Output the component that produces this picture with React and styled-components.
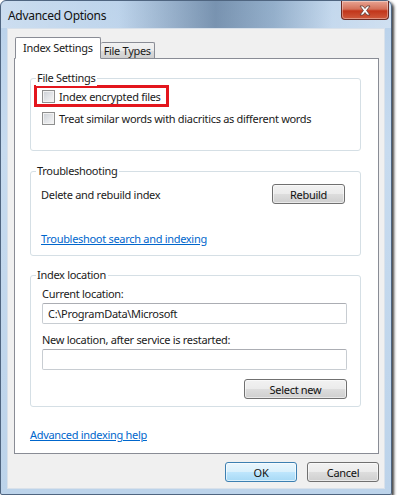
import React from 'react';
import styled, { createGlobalStyle } from 'styled-components';

const GlobalStyle = createGlobalStyle`
  body {
    margin: 0;
    background: #ffffff;
    font-family: 'Segoe UI', 'Noto Sans', sans-serif;
    font-size: 11px;
    letter-spacing: -0.3px;
    color: #1b1b1b;
  }
`;

const Window = styled.div`
  width: 390px;
  height: 493px;
  border: 1px solid #4f6580;
  border-radius: 6px 6px 2px 2px;
  background: linear-gradient(to bottom, #b9d1ea 0%, #c7dbef 30%, #bcd3ea 100%);
  box-shadow: 2px 2px 3px rgba(0, 0, 0, 0.75);
  display: flex;
  flex-direction: column;
`;

const TitleBar = styled.div`
  height: 27px;
  display: flex;
  align-items: flex-start;
  border-radius: 6px 6px 0 0;
  background: linear-gradient(
    to right,
    rgba(255, 255, 255, 0.25) 0%,
    rgba(255, 255, 255, 0.05) 30%,
    rgba(40, 70, 105, 0.45) 55%,
    rgba(60, 95, 130, 0.3) 70%,
    rgba(255, 255, 255, 0.15) 85%,
    rgba(255, 255, 255, 0.3) 100%
  );
`;

const Title = styled.span`
  margin: 6px 0 0 7px;
  font-size: 12px;
  letter-spacing: -0.3px;
  color: #111;
`;

const CloseButton = styled.div`
  margin-left: auto;
  margin-right: 2px;
  width: 46px;
  height: 18px;
  border: 1px solid #6b2a22;
  border-top: none;
  border-radius: 0 0 4px 4px;
  background: linear-gradient(to bottom, #e8a493 0%, #d4715a 45%, #c2351a 55%, #cf5a3c 100%);
  display: flex;
  align-items: center;
  justify-content: center;
  box-shadow: inset 0 0 0 1px rgba(255, 255, 255, 0.35);
`;

const Client = styled.div`
  margin: 0 6px 5px 6px;
  flex: 1;
  background: #f0f0f0;
  border: 1px solid #d9e1ea;
  display: flex;
  flex-direction: column;
  padding: 7px 5px 0 6px;
`;

const TabRow = styled.div`
  display: flex;
  align-items: flex-end;
  height: 22px;
  position: relative;
  z-index: 1;
`;

const Tab = styled.div`
  height: ${(p) => (p.active ? '22px' : '16px')};
  padding: 0 ${(p) => (p.active ? '7px' : '3px')};
  margin-left: ${(p) => (p.active ? '1px' : '0')};
  border: 1px solid #898c95;
  border-bottom: ${(p) => (p.active ? '1px solid #ffffff' : 'none')};
  border-left: ${(p) => (p.active ? '1px solid #898c95' : 'none')};
  border-radius: 2px 2px 0 0;
  background: ${(p) =>
    p.active ? '#ffffff' : 'linear-gradient(to bottom, #f2f2f2 0%, #ebebeb 50%, #dddddd 51%, #cfcfcf 100%)'};
  margin-bottom: ${(p) => (p.active ? '-1px' : '0')};
  display: flex;
  align-items: center;
  box-sizing: border-box;
  line-height: 14px;
`;

const Panel = styled.div`
  height: 396px;
  box-sizing: border-box;
  background: #ffffff;
  border: 1px solid #898c95;
  padding: 19px 17px 0 15px;
  display: flex;
  flex-direction: column;
`;

const Group = styled.div`
  position: relative;
  border: 1px solid #d5dfe5;
  border-radius: 3px;
  margin-top: ${(p) => p.gap || '0'};
  height: ${(p) => p.h};
  box-sizing: border-box;
  padding: ${(p) => p.pad};
  display: flex;
  flex-direction: column;
`;

const Legend = styled.span`
  position: absolute;
  top: -9px;
  left: 5px;
  padding: 0 2px 0 1px;
  background: #ffffff;
  line-height: 16px;
`;

const CheckRow = styled.label`
  display: flex;
  align-items: center;
  gap: 4px;
  height: ${(p) => (p.highlight ? '16px' : '22px')};
  align-self: flex-start;
  margin-left: ${(p) => (p.highlight ? '3px' : '11px')};
  padding: ${(p) => (p.highlight ? '0 5px 0 5px' : '0')};
  border: ${(p) => (p.highlight ? '3px solid #e3161d' : 'none')};
  white-space: nowrap;
`;

const Check = styled.span`
  width: 11px;
  height: 11px;
  border: 1px solid #8e8f8f;
  background: linear-gradient(135deg, #cbcfd5 0%, #e4e6e9 55%, #f6f6f6 100%);
  box-shadow: inset 0 0 0 1px #f2f2f2;
  flex-shrink: 0;
`;

const Row = styled.div`
  display: flex;
  align-items: center;
  justify-content: ${(p) => p.justify || 'space-between'};
  margin-top: ${(p) => p.gap || '0'};
`;

const Button = styled.div`
  width: ${(p) => p.w};
  height: 20px;
  box-sizing: border-box;
  border: 1px solid ${(p) => (p.primary ? '#3c7fb1' : '#707070')};
  border-radius: 3px;
  background: ${(p) =>
    p.primary
      ? 'linear-gradient(to bottom, #eaf6fd 0%, #d9f0fc 50%, #bee6fd 51%, #a7d9f5 100%)'
      : 'linear-gradient(to bottom, #f2f2f2 0%, #ebebeb 50%, #dddddd 51%, #cfcfcf 100%)'};
  box-shadow: inset 0 0 0 1px ${(p) => (p.primary ? 'rgba(255,255,255,0.6)' : 'rgba(255,255,255,0.55)')};
  display: flex;
  align-items: center;
  justify-content: center;
  color: #111;
`;

const Link = styled.a`
  color: #0066cc;
  text-decoration: underline;
  line-height: 15px;
  margin-top: ${(p) => p.gap || '0'};
  align-self: flex-start;
`;

const Label = styled.div`
  line-height: 15px;
  margin-top: ${(p) => p.gap || '0'};
`;

const TextBox = styled.div`
  height: 21px;
  box-sizing: border-box;
  border: 1px solid #c8cdd2;
  border-top-color: #abadb3;
  border-radius: 2px;
  background: #ffffff;
  margin-top: 2px;
  padding: 0 5px;
  display: flex;
  align-items: center;
`;

const Footer = styled.div`
  display: flex;
  justify-content: flex-end;
  gap: 10px;
  margin: 8px 0 0 0;
`;

const CloseIcon = () => (
  <svg width="14" height="11" viewBox="0 0 14 11">
    <path
      d="M2 1 L5 1 L7 3.5 L9 1 L12 1 L8.6 5.5 L12 10 L9 10 L7 7.5 L5 10 L2 10 L5.4 5.5 Z"
      fill="#ffffff"
      stroke="#5a3a34"
      strokeWidth="0.8"
    />
  </svg>
);

export default function App() {
  return (
    <>
      <GlobalStyle />
      <Window>
        <TitleBar>
          <Title>Advanced Options</Title>
          <CloseButton>
            <CloseIcon />
          </CloseButton>
        </TitleBar>
        <Client>
          <TabRow>
            <Tab active>Index Settings</Tab>
            <Tab>File Types</Tab>
          </TabRow>
          <Panel>
            <Group h="73px" pad="6px 0 0 0">
              <Legend>File Settings</Legend>
              <CheckRow highlight>
                <Check />
                Index encrypted files
              </CheckRow>
              <CheckRow>
                <Check />
                Treat similar words with diacritics as different words
              </CheckRow>
            </Group>

            <Group gap="20px" h="85px" pad="12px 15px 0 10px">
              <Legend>Troubleshooting</Legend>
              <Row>
                <span>Delete and rebuild index</span>
                <Button w="73px">Rebuild</Button>
              </Row>
              <Link gap="27px" href="#">Troubleshoot search and indexing</Link>
            </Group>

            <Group gap="19px" h="132px" pad="10px 13px 0 11px">
              <Legend>Index location</Legend>
              <Label>Current location:</Label>
              <TextBox>C:\ProgramData\Microsoft</TextBox>
              <Label gap="8px">New location, after service is restarted:</Label>
              <TextBox />
              <Row justify="flex-end" gap="9px">
                <Button w="103px">Select new</Button>
              </Row>
            </Group>

            <Link gap="20px" href="#">Advanced indexing help</Link>
          </Panel>
          <Footer>
            <Button primary w="72px">OK</Button>
            <Button w="72px">Cancel</Button>
          </Footer>
        </Client>
      </Window>
    </>
  );
}
